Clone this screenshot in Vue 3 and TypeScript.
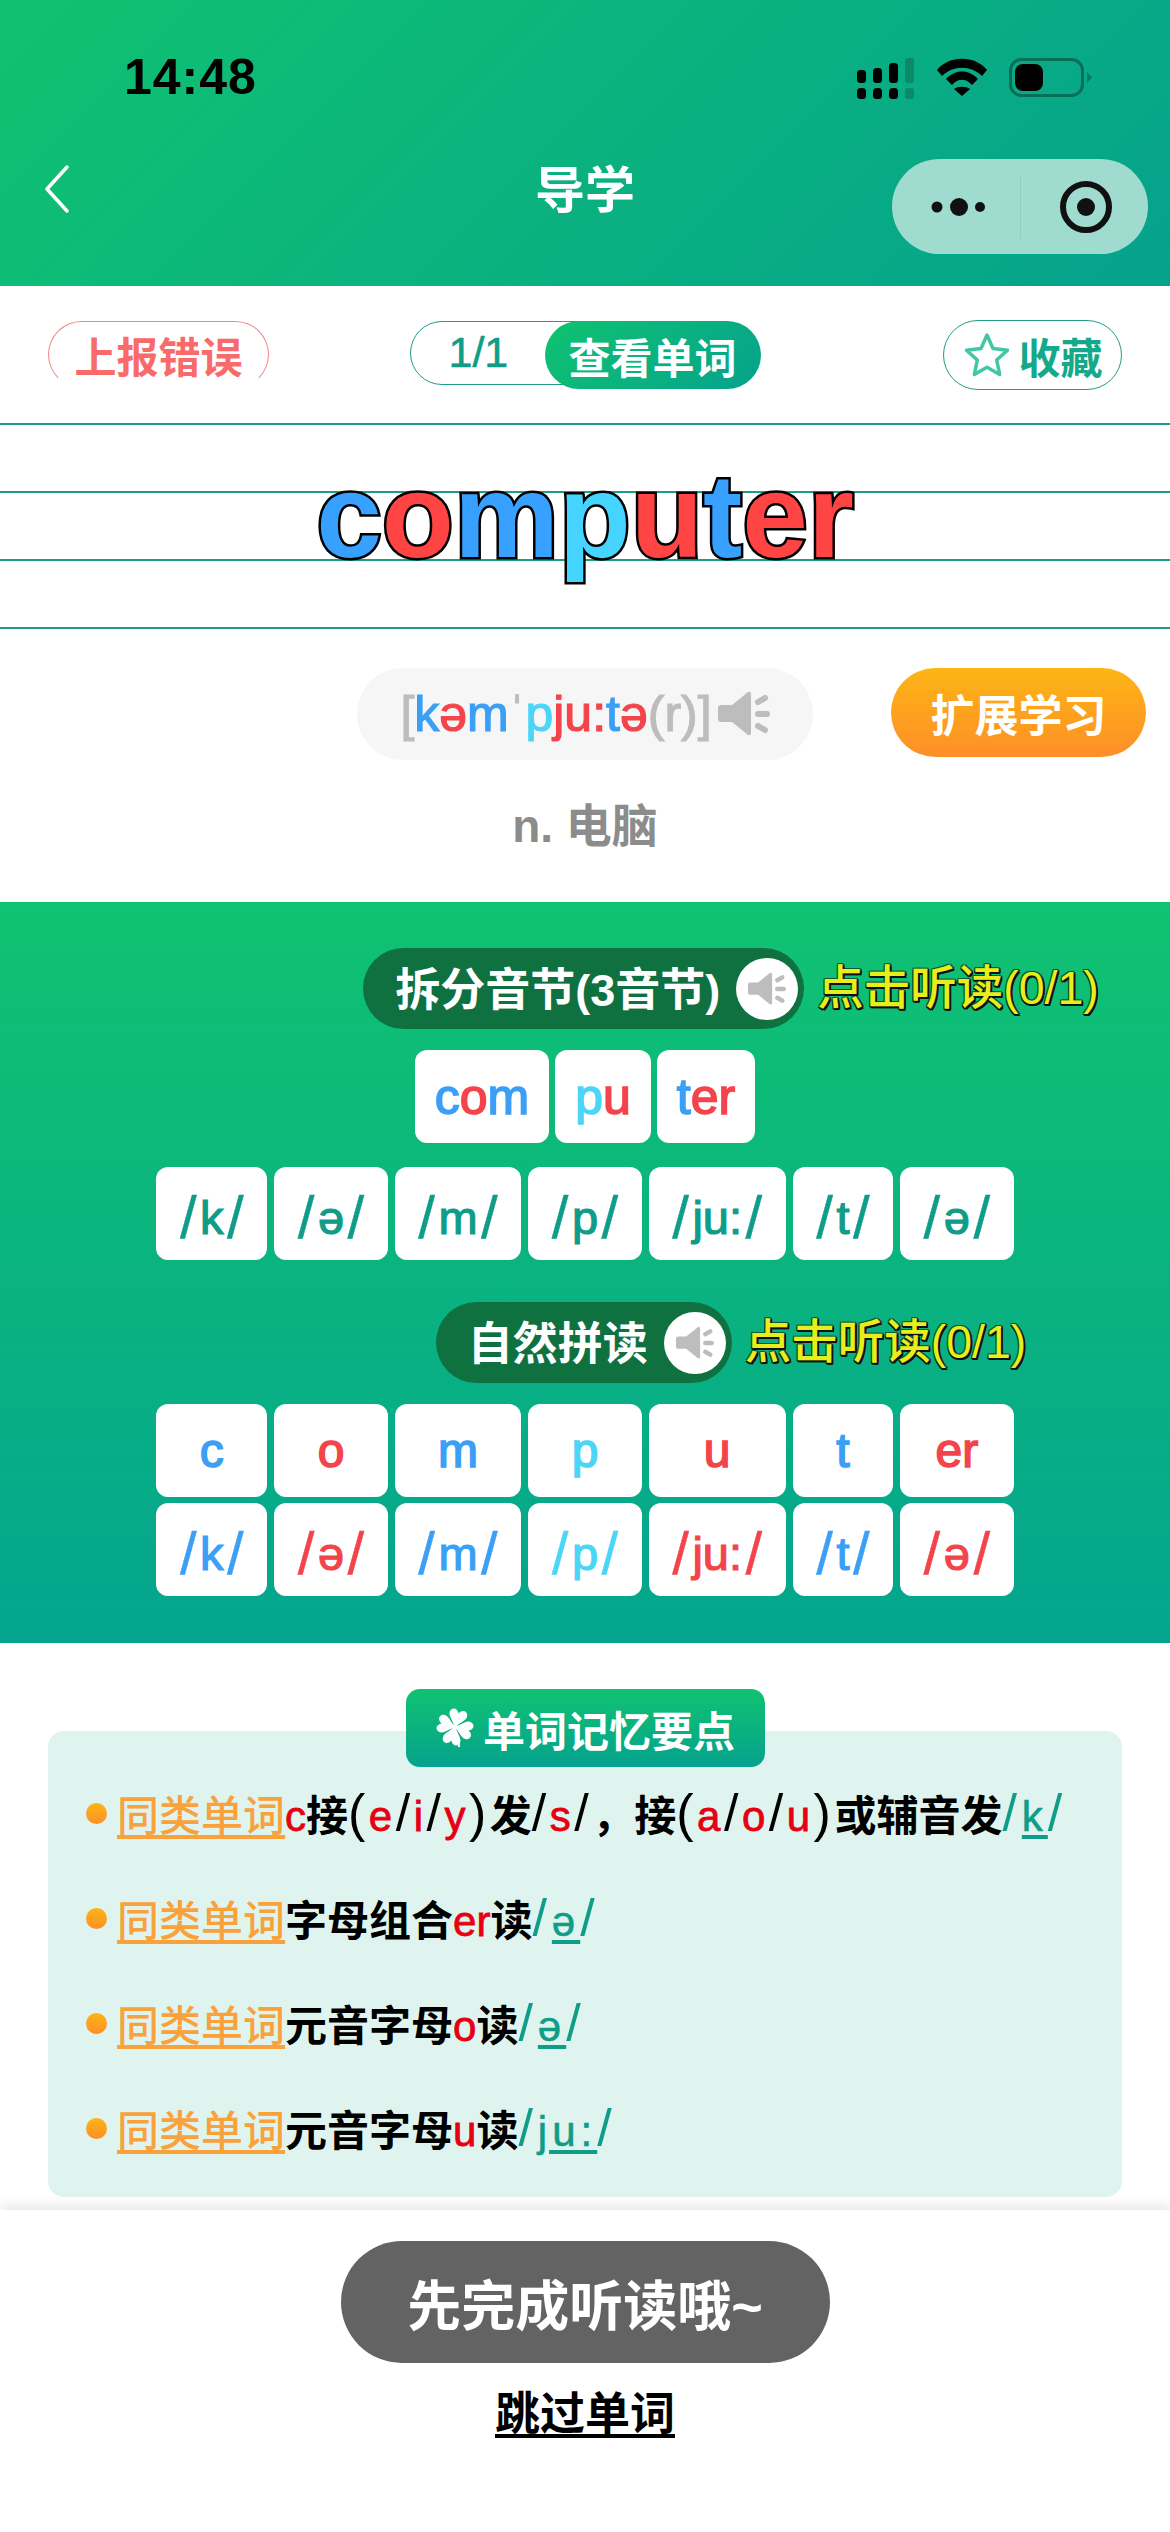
<script setup lang="ts">
const word = [
  { t: "c", c: "blue" },
  { t: "o", c: "red" },
  { t: "m", c: "blue" },
  { t: "p", c: "cyan" },
  { t: "u", c: "red" },
  { t: "t", c: "blue" },
  { t: "er", c: "red" },
];

const phonetic = [
  { t: "[", c: "gray" },
  { t: "k", c: "blue" },
  { t: "ə", c: "red" },
  { t: "m", c: "blue" },
  { t: "ˈ", c: "gray" },
  { t: "p", c: "cyan" },
  { t: "ju:", c: "red" },
  { t: "t", c: "blue" },
  { t: "ə", c: "red" },
  { t: "(r)]", c: "gray" },
];

const syllables = [
  [
    { t: "c", c: "blue" },
    { t: "o", c: "red" },
    { t: "m", c: "blue" },
  ],
  [
    { t: "p", c: "cyan" },
    { t: "u", c: "red" },
  ],
  [
    { t: "t", c: "blue" },
    { t: "er", c: "red" },
  ],
];

const sounds = ["k", "ə", "m", "p", "ju:", "t", "ə"];
const soundColors = ["blue", "red", "blue", "cyan", "red", "blue", "red"];
const leafAngles = [15, 105, 195, 285];
</script>

<template>
  <div class="page">
    <div class="main">
      <header class="header">
        <div class="status">
          <span class="time">14:48</span>
          <div class="status-icons">
            <svg width="58" height="42" viewBox="0 0 58 42">
              <g fill="#000">
                <rect x="0" y="12" width="9" height="13" rx="3.500" />
                <rect x="16" y="10" width="9" height="15" rx="3.500" />
                <rect x="32" y="5" width="9" height="20" rx="3.500" />
                <rect x="0" y="30" width="9" height="11" rx="3.500" />
                <rect x="16" y="30" width="9" height="11" rx="3.500" />
                <rect x="32" y="30" width="9" height="11" rx="3.500" />
              </g>
              <g fill="#0a8a68">
                <rect x="48" y="0" width="9" height="25" rx="3" />
                <rect x="48" y="30" width="9" height="11" rx="3" />
              </g>
            </svg>
            <svg width="50" height="38" viewBox="0 0 50 38">
              <g fill="#000">
                <path d="M0 12C12-3 38-3 50 12L45 18C34 7 16 7 5 18Z" />
                <path d="M9 21C18 11 32 11 41 21L35 27C29 20 21 20 15 27Z" />
                <path d="M17 31C21 28 29 28 33 31L25 38Z" />
              </g>
            </svg>
            <svg width="83" height="40" viewBox="0 0 83 40">
              <rect x="1.500" y="1.500" width="72" height="36" rx="11" fill="none" stroke="#0a6e56" stroke-width="3" />
              <rect x="6" y="6" width="28" height="27" rx="8" fill="#000" />
              <path d="M78 14l5 5.500-5 5.500z" fill="#0a7c5e" />
            </svg>
          </div>
        </div>
        <div class="nav">
          <svg class="back" width="26" height="48" viewBox="0 0 26 48">
            <path d="M23 2L3 24l20 22" fill="none" stroke="#fff" stroke-width="3.500" stroke-linecap="round" stroke-linejoin="round" />
          </svg>
          <h1 class="title">导学</h1>
          <div class="capsule">
            <svg width="70" height="24" viewBox="0 0 70 24">
              <circle cx="11" cy="12" r="5.500" fill="#111" />
              <circle cx="33" cy="12" r="9" fill="#111" />
              <circle cx="54" cy="12" r="5" fill="#111" />
            </svg>
            <span class="capsule-line"></span>
            <svg width="56" height="56" viewBox="0 0 56 56">
              <circle cx="28" cy="28" r="23" fill="none" stroke="#111" stroke-width="6" />
              <circle cx="28" cy="28" r="9" fill="#111" />
            </svg>
          </div>
        </div>
      </header>

      <section class="intro">
        <div class="toolbar">
          <button type="button" class="report">上报错误</button>
          <div class="pager">
            <span class="count">1/1</span>
            <button type="button" class="view">查看单词</button>
          </div>
          <button type="button" class="collect">
            <svg width="50" height="50" viewBox="0 0 50 50">
              <path d="M25 5l6 13.500 14.500 1.700-10.800 9.800 3 14.500L25 37.200 12.300 44.500l3-14.500L4.500 20.200 19 18.500z" fill="none" stroke="#41c7a5" stroke-width="3.500" stroke-linejoin="round" />
            </svg>
            收藏
          </button>
        </div>

        <div class="lines">
          <div class="line"></div>
          <div class="line"></div>
          <div class="line"></div>
          <div class="word">
            <span v-for="(part, i) in word" :key="i" :class="part.c">{{ part.t }}</span>
          </div>
        </div>

        <div class="phonetic-row">
          <div class="phonetic">
            <span v-for="(part, i) in phonetic" :key="i" :class="part.c">{{ part.t }}</span>
            <svg class="speaker" width="52" height="46" viewBox="0 0 52 46">
              <path d="M3 14H14L30 1Q33 0 33 3V42Q33 45 30 44L14 31H3Q0 31 0 28V17Q0 14 3 14Z" fill="#bdbdbd" />
              <g stroke="#bdbdbd" stroke-width="6" stroke-linecap="round">
                <path d="M40 11l7-4" />
                <path d="M40 23h9" />
                <path d="M40 35l7 4" />
              </g>
            </svg>
          </div>
          <button type="button" class="more">扩展学习</button>
        </div>

        <p class="meaning">n. 电脑</p>
      </section>

      <section class="practice">
        <div class="label-row">
          <div class="pill">
            <span class="pill-text">拆分音节(3音节)</span>
            <span class="sound-dot">
              <svg width="38" height="34" viewBox="0 0 52 46">
                <path d="M3 14H14L30 1Q33 0 33 3V42Q33 45 30 44L14 31H3Q0 31 0 28V17Q0 14 3 14Z" fill="#bdbdbd" />
                <g stroke="#bdbdbd" stroke-width="6" stroke-linecap="round">
                  <path d="M40 11l7-4" />
                  <path d="M40 23h9" />
                  <path d="M40 35l7 4" />
                </g>
              </svg>
            </span>
          </div>
          <span class="listen">点击听读(0/1)</span>
        </div>

        <div class="syllables">
          <div v-for="(syllable, i) in syllables" :key="i" class="card syllable">
            <span v-for="(part, j) in syllable" :key="j" :class="part.c">{{ part.t }}</span>
          </div>
        </div>

        <div class="sound-grid first">
          <div v-for="(s, i) in sounds" :key="i" class="card sound teal">
            <span class="slash">/</span><span class="inner">{{ s }}</span><span class="slash">/</span>
          </div>
        </div>

        <div class="label-row second">
          <div class="pill">
            <span class="pill-text">自然拼读</span>
            <span class="sound-dot">
              <svg width="38" height="34" viewBox="0 0 52 46">
                <path d="M3 14H14L30 1Q33 0 33 3V42Q33 45 30 44L14 31H3Q0 31 0 28V17Q0 14 3 14Z" fill="#bdbdbd" />
                <g stroke="#bdbdbd" stroke-width="6" stroke-linecap="round">
                  <path d="M40 11l7-4" />
                  <path d="M40 23h9" />
                  <path d="M40 35l7 4" />
                </g>
              </svg>
            </span>
          </div>
          <span class="listen">点击听读(0/1)</span>
        </div>

        <div class="sound-grid">
          <div v-for="(part, i) in word" :key="i" class="card letter" :class="part.c">{{ part.t }}</div>
          <div v-for="(s, i) in sounds" :key="'s' + i" class="card sound" :class="soundColors[i]">
            <span class="slash">/</span><span class="inner">{{ s }}</span><span class="slash">/</span>
          </div>
        </div>
      </section>

      <section class="memory">
        <div class="memory-title">
          <svg width="40" height="42" viewBox="0 0 40 42">
            <g fill="#fff">
              <path
                v-for="angle in leafAngles"
                :key="angle"
                d="M20 22C18 15 11 12 11 7 11 2 17 0 20 6 23 0 29 2 29 7 29 12 22 15 20 22Z"
                :transform="`rotate(${angle} 20 20)`"
              />
            </g>
            <path d="M21 24Q24 33 24 40" fill="none" stroke="#fff" stroke-width="2" />
          </svg>
          单词记忆要点
        </div>
        <div class="panel">
          <div class="tip">
            <i class="dot"></i>
            <p>
              <span class="same">同类单词</span><b class="hl">c</b>接<span class="gap">(<b class="hl">e</b>/<b class="hl">i</b>/<b class="hl">y</b>)</span>发<span class="gap">/<b class="hl">s</b>/</span>，接<span class="gap">(<b class="hl">a</b>/<b class="hl">o</b>/<b class="hl">u</b>)</span>或辅音发<span class="ipa">/<u>k</u>/</span>
            </p>
          </div>
          <div class="tip">
            <i class="dot"></i>
            <p><span class="same">同类单词</span>字母组合<b class="hl">er</b>读<span class="ipa">/<u>ə</u>/</span></p>
          </div>
          <div class="tip">
            <i class="dot"></i>
            <p><span class="same">同类单词</span>元音字母<b class="hl">o</b>读<span class="ipa">/<u>ə</u>/</span></p>
          </div>
          <div class="tip">
            <i class="dot"></i>
            <p><span class="same">同类单词</span>元音字母<b class="hl">u</b>读<span class="ipa">/<u>ju:</u>/</span></p>
          </div>
        </div>
      </section>
    </div>

    <footer class="footer">
      <button type="button" class="finish">先完成听读哦~</button>
      <a class="skip">跳过单词</a>
    </footer>
  </div>
</template>

<style scoped>
.page {
  width: 1170px;
  height: 2532px;
  display: flex;
  flex-direction: column;
  overflow: hidden;
  background: #fff;
  font-family: "Liberation Sans", "Noto Sans CJK SC", sans-serif;
  color: #000;
}

.main {
  flex: 1;
  min-height: 0;
  overflow: hidden;
}

button {
  font-family: inherit;
  border: none;
  padding: 0;
  cursor: pointer;
}

.blue { color: #3b9ff5; }
.red { color: #f4444b; }
.cyan { color: #4bd5f7; }
.gray { color: #bdbdbd; }
.teal { color: #0f9c88; }

/* header */
.header {
  height: 286px;
  background: linear-gradient(135deg, #10c270, #05a28d);
}

.status {
  height: 154px;
  display: flex;
  align-items: flex-start;
  justify-content: space-between;
  padding: 52px 78px 0 124px;
  box-sizing: border-box;
}

.time {
  font-size: 50px;
  line-height: 50px;
  font-weight: 700;
  letter-spacing: 1px;
}

.status-icons {
  display: flex;
  align-items: flex-start;
  gap: 22px;
  margin-top: 6px;
}

.nav {
  display: grid;
  grid-template-columns: 1fr auto 1fr;
  align-items: start;
  padding-top: 5px;
}

.back {
  margin: 6px 0 0 44px;
}

.title {
  margin: 4px 0 0;
  font-size: 50px;
  line-height: 56px;
  font-weight: 700;
  color: #fff;
}

.capsule {
  justify-self: end;
  margin-right: 22px;
  width: 256px;
  height: 95px;
  border-radius: 48px;
  background: #9fdccf;
  display: flex;
  align-items: center;
  box-sizing: border-box;
  padding-left: 34px;
}

.capsule-line {
  width: 1px;
  height: 64px;
  background: #8fcfc2;
  margin: 0 37px 0 24px;
}

/* intro */
.intro {
  height: 616px;
}

.toolbar {
  height: 137px;
  display: grid;
  grid-template-columns: 1fr auto 1fr;
  align-items: start;
  padding: 35px 48px 0;
  box-sizing: border-box;
}

.report {
  justify-self: start;
  width: 221px;
  height: 67px;
  border: 1.500px solid #f3858a;
  border-bottom-color: #fff;
  border-radius: 34px;
  background: #fff;
  color: #f96a6a;
  font-size: 42px;
  font-weight: 700;
}

.pager {
  display: flex;
  align-items: flex-start;
}

.count {
  width: 200px;
  height: 64px;
  box-sizing: border-box;
  border: 1.500px solid #1f9c8a;
  border-radius: 32px;
  padding-left: 38px;
  font-size: 43px;
  line-height: 60px;
  color: #0f9c88;
  -webkit-text-stroke: 0.6px currentColor;
}

.view {
  margin-left: -65px;
  position: relative;
  width: 216px;
  height: 68px;
  border-radius: 34px;
  background: linear-gradient(135deg, #10c270, #05a28d);
  color: #fff;
  font-size: 42px;
  font-weight: 700;
}

.collect {
  justify-self: end;
  width: 179px;
  height: 70px;
  margin-top: -1px;
  border: 1.500px solid #1f9c8a;
  border-radius: 35px;
  background: #fff;
  color: #14a98a;
  font-size: 42px;
  font-weight: 700;
  display: flex;
  align-items: center;
  justify-content: center;
  gap: 6px;
}

.lines {
  position: relative;
  border-top: 2px solid #1d9d85;
}

.line {
  height: 66px;
  border-bottom: 2px solid #1d9d85;
}

.word {
  position: absolute;
  left: 0;
  right: 0;
  top: 32px;
  text-align: center;
  font-size: 118px;
  line-height: 118px;
  font-weight: 700;
  -webkit-text-stroke: 5px #000;
  paint-order: stroke fill;
}

.word .blue { color: #38a0ff; }
.word .red { color: #ff4444; }
.word .cyan { color: #44d4ff; }

.phonetic-row {
  margin-top: 39px;
  display: grid;
  grid-template-columns: 1fr auto 1fr;
  align-items: start;
}

.phonetic {
  grid-column: 2;
  width: 456px;
  height: 92px;
  border-radius: 46px;
  background: #f6f6f6;
  display: flex;
  align-items: center;
  justify-content: center;
  font-size: 50px;
  -webkit-text-stroke: 1.200px currentColor;
}

.speaker {
  margin-left: 6px;
}

.more {
  justify-self: end;
  margin-right: 24px;
  width: 255px;
  height: 89px;
  border-radius: 45px;
  background: linear-gradient(180deg, #fdb515, #fd8f28);
  color: #fff;
  font-size: 44px;
  font-weight: 700;
}

.meaning {
  margin: 36px 0 0;
  text-align: center;
  font-size: 46px;
  line-height: 60px;
  font-weight: 700;
  color: #8c8c8c;
}

/* practice */
.practice {
  height: 741px;
  box-sizing: border-box;
  padding-top: 46px;
  background: linear-gradient(180deg, #10c271, #04a58e);
}

.label-row {
  display: flex;
  justify-content: center;
  align-items: center;
  gap: 13px;
  padding-left: 292px;
}

.label-row.second {
  margin-top: 42px;
}

.pill {
  height: 81px;
  box-sizing: border-box;
  display: flex;
  align-items: center;
  gap: 16px;
  padding: 0 6px 0 32px;
  border-radius: 41px;
  background: #0f7040;
  color: #fff;
  font-size: 45px;
  font-weight: 700;
}

.pill-text {
  margin-top: -5px;
}

.sound-dot {
  width: 62px;
  height: 62px;
  border-radius: 50%;
  background: #fff;
  display: flex;
  align-items: center;
  justify-content: center;
}

.listen {
  margin-top: -10px;
  font-size: 46.500px;
  font-weight: 500;
  color: #e8ee1c;
  text-shadow: 2px 2px 0 #111, -1px -1px 0 #0b5a34, 1px -1px 0 #0b5a34, -1px 1px 0 #111, 2px 0 0 #111, 0 2px 0 #111;
}

.card {
  height: 93px;
  box-sizing: border-box;
  border-radius: 12px;
  background: #fff;
  display: flex;
  align-items: center;
  justify-content: center;
}

.syllables {
  margin-top: 21px;
  display: flex;
  justify-content: center;
  gap: 6px;
}

.syllable {
  padding: 0 20px;
  font-size: 50px;
  -webkit-text-stroke: 1.600px currentColor;
}

.sound-grid {
  margin-top: 21px;
  display: grid;
  grid-template-columns: repeat(7, auto);
  justify-content: center;
  column-gap: 7px;
  row-gap: 6px;
}

.sound-grid.first {
  margin-top: 24px;
}

.letter {
  font-size: 48px;
  -webkit-text-stroke: 1.600px currentColor;
}

.sound {
  padding: 0 23.500px;
  font-size: 47px;
  align-items: baseline;
  line-height: 93px;
}

.slash {
  font-size: 60px;
  position: relative;
  top: 4px;
  -webkit-text-stroke: 0.400px currentColor;
}

.inner {
  margin: 0 3.500px;
  -webkit-text-stroke: 1.200px currentColor;
}

/* memory */
.memory {
  padding: 46px 48px 0;
}

.memory-title {
  position: relative;
  width: 359px;
  height: 78px;
  margin: 0 auto;
  border-radius: 14px;
  background: linear-gradient(180deg, #10c271, #05a28d);
  color: #fff;
  font-size: 42px;
  font-weight: 700;
  display: flex;
  align-items: center;
  justify-content: center;
  gap: 8px;
}

.panel {
  margin-top: -36px;
  height: 466px;
  box-sizing: border-box;
  padding: 31px 0 0 38px;
  border-radius: 16px;
  background: #dff4ee;
}

.tip {
  height: 105px;
  display: flex;
  align-items: center;
  gap: 10px;
}

.tip p {
  margin: 0;
  font-size: 42px;
  line-height: 60px;
  font-weight: 700;
  white-space: nowrap;
}

.dot {
  width: 21px;
  height: 21px;
  border-radius: 50%;
  background: linear-gradient(180deg, #fdb515, #fd8f28);
  margin-top: -2px;
}

.same {
  color: #f9a23c;
  font-weight: 500;
  text-decoration: underline;
  text-underline-offset: 4px;
}

.hl {
  color: #e60012;
  font-size: 42px;
  font-weight: 500;
  -webkit-text-stroke: 0.800px currentColor;
}

.gap {
  font-size: 52px;
  letter-spacing: 3.500px;
  font-weight: 400;
}

.ipa {
  color: #0f9c88;
  font-size: 52px;
  font-weight: 400;
  letter-spacing: 5px;
}

.ipa u {
  font-size: 42px;
  -webkit-text-stroke: 0.600px currentColor;
  text-underline-offset: 4px;
}

/* footer */
.footer {
  height: 322px;
  flex-shrink: 0;
  position: relative;
  box-sizing: border-box;
  padding-top: 31px;
  background: #fff;
  box-shadow: 0 -6px 10px rgba(0, 0, 0, 0.08);
  display: flex;
  flex-direction: column;
  align-items: center;
}

.finish {
  width: 489px;
  height: 122px;
  border-radius: 61px;
  background: #636363;
  color: #fff;
  font-size: 54px;
  font-weight: 700;
}

.skip {
  margin-top: 22px;
  font-size: 45px;
  line-height: 60px;
  font-weight: 700;
  color: #000;
  text-decoration: underline;
  text-underline-offset: 4px;
}
</style>

<style>
body {
  margin: 0;
}
</style>
